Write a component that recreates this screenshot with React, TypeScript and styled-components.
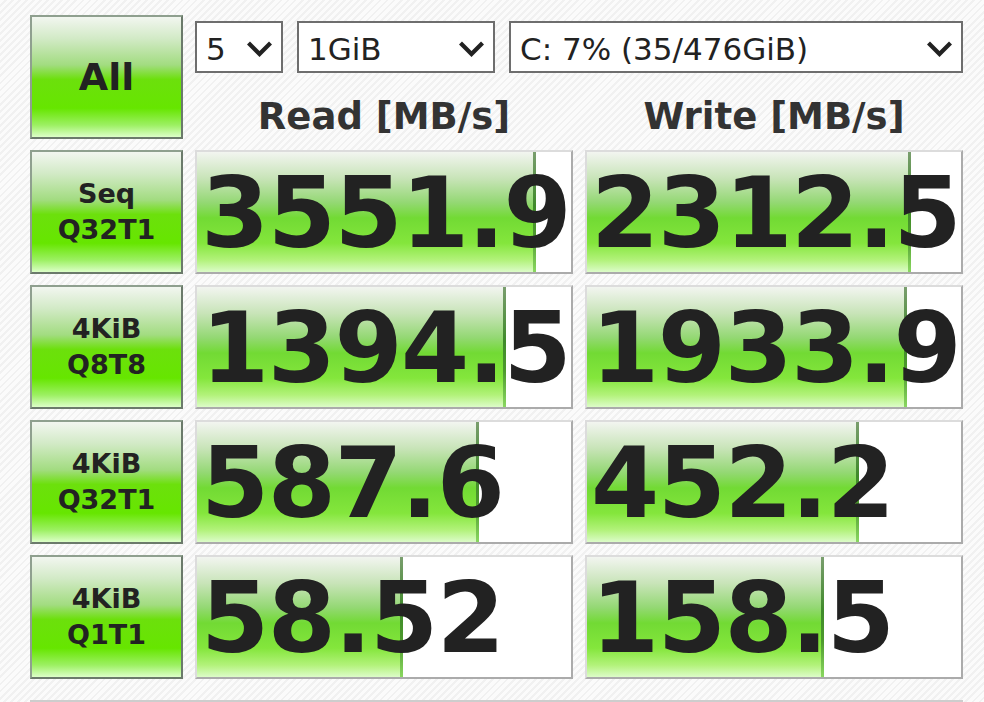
import React from 'react';
import styled, {createGlobalStyle} from "styled-components";

const GlobalStyle = createGlobalStyle`
    html, body {
        margin: 0;
        padding: 0;
    }
    body {
        width: 984px;
        height: 702px;
        overflow: hidden;
        font-family: "DejaVu Sans", Verdana, sans-serif;
        color: #222;
        background: repeating-linear-gradient(135deg, #fbfbfb 0 3px, #f1f1f1 3px 5px);
    }
`

const Page = styled.main`
    padding: 15px 21px 0 30px;
`
const Grid = styled.section`
    display: grid;
    grid-template-columns: 153px 378px 378px;
    column-gap: 12px;
    row-gap: 11px;
`
const GreenButton = styled.button<{ $size: number }>`
    height: 124px;
    box-sizing: border-box;
    margin: 0;
    padding: 0;
    border: 2px solid;
    border-color: #8fa08f #6b7a6b #6b7a6b #8fa08f;
    background: linear-gradient(to bottom, #f2f6f0 0%, #d2eac6 18%, #a2dc80 40%, #6ce00c 52%, #66e600 76%, #9cf062 90%, #dcffc8 100%);
    font-family: "DejaVu Sans", Verdana, sans-serif;
    font-weight: bold;
    font-size: ${props => props.$size}px;
    line-height: 36px;
    color: #222;
    cursor: pointer;
`
const TopPanel = styled.div`
    grid-column: 2 / 4;
    display: flex;
    flex-direction: column;
`
const SelectRow = styled.div`
    display: flex;
    gap: 14px;
    margin-top: 6px;
`
const Select = styled.div<{ $width?: number }>`
    ${props => props.$width ? `width: ${props.$width}px;` : 'flex: 1;'}
    height: 52px;
    box-sizing: border-box;
    border: 2px solid #6e6e6e;
    background: #fff;
    display: flex;
    align-items: center;
    justify-content: space-between;
    padding: 3px 8px 0 9px;
    font-size: 31px;
    color: #222;
    white-space: nowrap;
`
const Headers = styled.div`
    display: grid;
    grid-template-columns: 378px 378px;
    column-gap: 12px;
    height: 66px;
    align-items: end;
`
const HeaderTitle = styled.h2`
    margin: 0;
    text-align: center;
    font-size: 37px;
    line-height: 44px;
    font-weight: bold;
    color: #333;
`
const Cell = styled.div`
    position: relative;
    height: 124px;
    box-sizing: border-box;
    border: 2px solid;
    border-color: #dcdcdc #ababab #ababab #dcdcdc;
    background: #fff;
    overflow: hidden;
    display: flex;
    align-items: center;
`
const Bar = styled.div<{ $pct: number }>`
    position: absolute;
    left: 0;
    top: 0;
    bottom: 0;
    width: ${props => props.$pct}%;
    background: linear-gradient(to bottom, #f2f5f0 0%, #c8e4b8 22%, #94d874 42%, #72da34 55%, #84e63c 76%, #b2f27a 90%, #dcfcc8 100%);

    &::after {
        content: "";
        position: absolute;
        right: 0;
        top: 0;
        bottom: 0;
        width: 3px;
        background: linear-gradient(to bottom, #7a9e6e 0%, #3f8a2a 45%, #4e9a2e 70%, #8ad860 100%);
    }
`
const Value = styled.span`
    position: relative;
    padding: 2px 0 0 4px;
    font-size: 98px;
    font-weight: bold;
    letter-spacing: -1.5px;
    line-height: 1;
    color: #222;
    white-space: nowrap;
`
const Comment = styled.div`
    margin-top: 21px;
    width: 933px;
    height: 20px;
    border-top: 2px solid #cdcdcd;
`

const Chevron = () => (
    <svg width="27" height="18" viewBox="0 0 27 18">
        <path d="M2.5 3 L13.5 14 L24.5 3" fill="none" stroke="#222" strokeWidth="4.2"/>
    </svg>
)

interface IResult {
    label: [string, string];
    read: string;
    readPct: number;
    write: string;
    writePct: number;
}

const results: IResult[] = [
    {label: ['Seq', 'Q32T1'], read: '3551.9', readPct: 90.6, write: '2312.5', writePct: 86.6},
    {label: ['4KiB', 'Q8T8'], read: '1394.5', readPct: 82.6, write: '1933.9', writePct: 85.5},
    {label: ['4KiB', 'Q32T1'], read: '587.6', readPct: 75.3, write: '452.2', writePct: 72.7},
    {label: ['4KiB', 'Q1T1'], read: '58.52', readPct: 55.2, write: '158.5', writePct: 63.3},
]

const App = () => {
    return (
        <Page>
            <GlobalStyle/>
            <Grid>
                <GreenButton $size={38}>All</GreenButton>
                <TopPanel>
                    <SelectRow>
                        <Select $width={88}>5<Chevron/></Select>
                        <Select $width={198}>1GiB<Chevron/></Select>
                        <Select>C: 7% (35/476GiB)<Chevron/></Select>
                    </SelectRow>
                    <Headers>
                        <HeaderTitle>Read [MB/s]</HeaderTitle>
                        <HeaderTitle>Write [MB/s]</HeaderTitle>
                    </Headers>
                </TopPanel>
                {results.map(r => (
                    <React.Fragment key={r.label.join()}>
                        <GreenButton $size={27}>{r.label[0]}<br/>{r.label[1]}</GreenButton>
                        <Cell>
                            <Bar $pct={r.readPct}/>
                            <Value>{r.read}</Value>
                        </Cell>
                        <Cell>
                            <Bar $pct={r.writePct}/>
                            <Value>{r.write}</Value>
                        </Cell>
                    </React.Fragment>
                ))}
            </Grid>
            <Comment/>
        </Page>
    );
};

export default App;
